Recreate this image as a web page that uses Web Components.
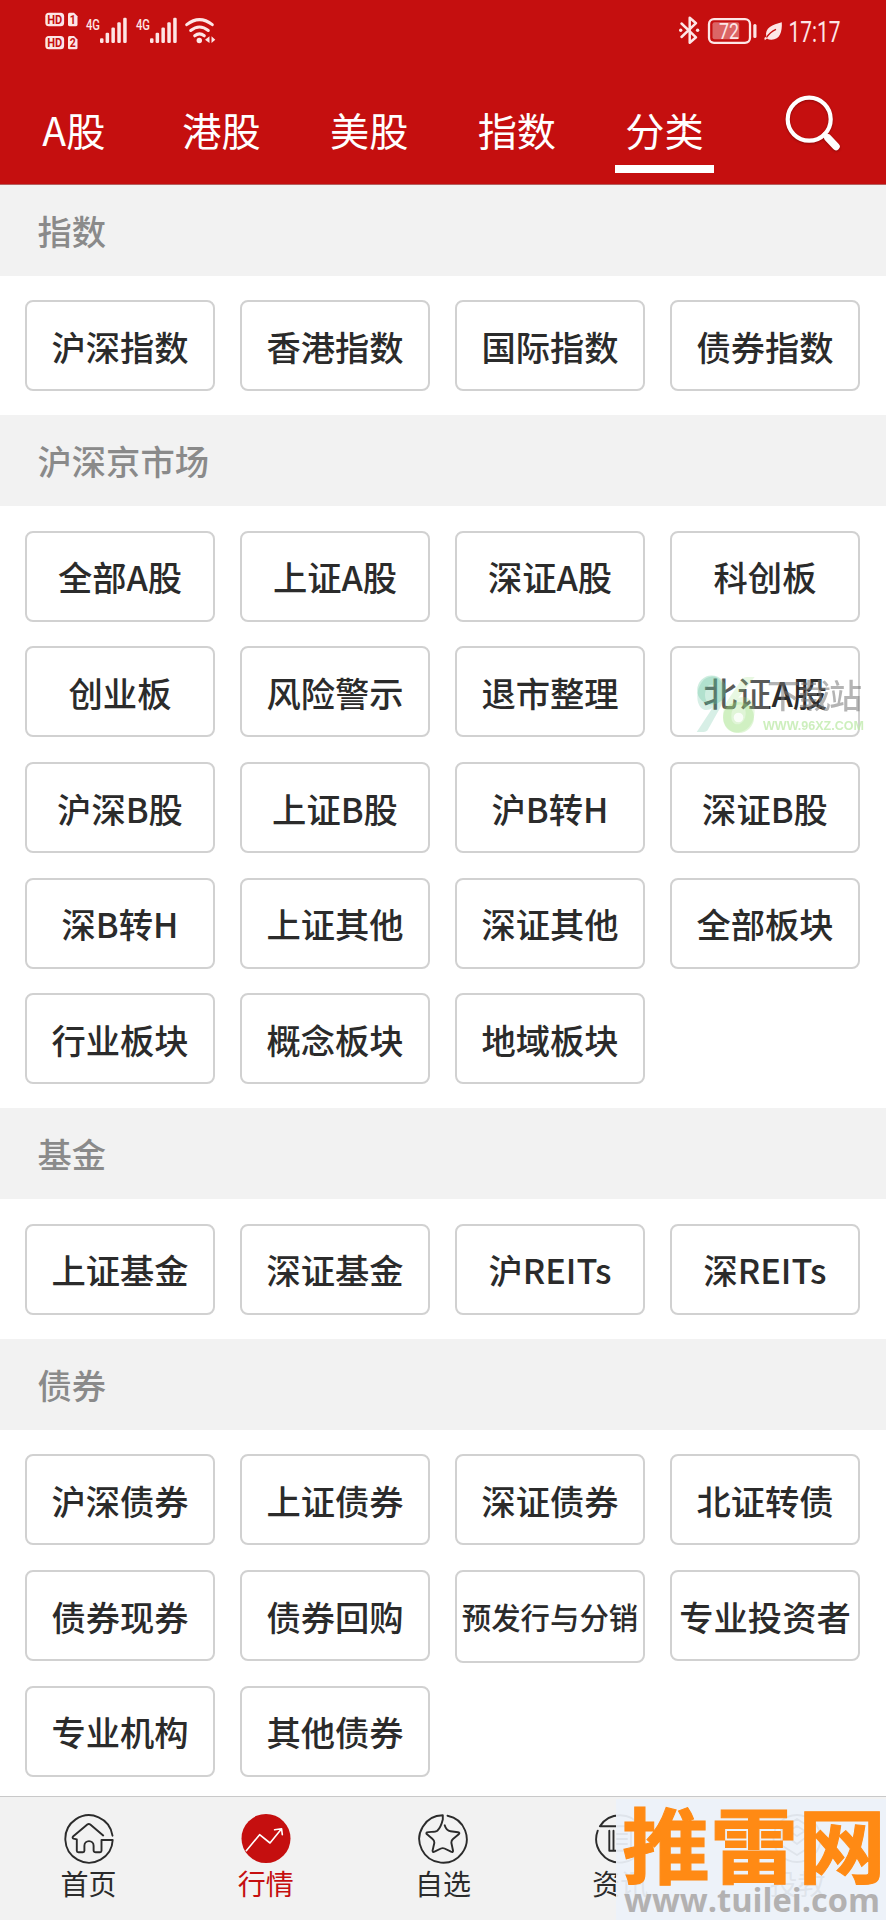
<!DOCTYPE html>
<html lang="zh-CN">
<head>
<meta charset="utf-8">
<title>行情 - 分类</title>
<style>
  * { box-sizing: border-box; }
  body {
    margin: 0;
    width: 886px;
    height: 1920px;
    overflow: hidden;
    background: #fff;
    color: #2b2b2b;
    font-family: "Noto Sans CJK SC", sans-serif;
  }
</style>
</head>
<body>
<market-app></market-app>

<script>
(() => {
  "use strict";

  const tabs = ["A股", "港股", "美股", "指数", "分类"];

  const sections = [
    { title: "指数", items: ["沪深指数", "香港指数", "国际指数", "债券指数"] },
    {
      title: "沪深京市场",
      items: [
        "全部A股", "上证A股", "深证A股", "科创板",
        "创业板", "风险警示", "退市整理", "北证A股",
        "沪深B股", "上证B股", "沪B转H", "深证B股",
        "深B转H", "上证其他", "深证其他", "全部板块",
        "行业板块", "概念板块", "地域板块",
      ],
    },
    { title: "基金", items: ["上证基金", "深证基金", "沪REITs", "深REITs"] },
    {
      title: "债券",
      items: [
        "沪深债券", "上证债券", "深证债券", "北证转债",
        "债券现券", "债券回购", "预发行与分销", "专业投资者",
        "专业机构", "其他债券",
      ],
    },
  ];

  const navItems = [
    {
      label: "首页",
      icon: `
        <path d="M48.500 21.700A23.700 23.700 0 1 0 48.700 26H37.500V36.800Q37.500 38.300 36 38.300H31.700Q29.800 38.300 29.600 36.500V31.700A4.600 4.600 0 0 0 20.400 31.700V36.800Q20.400 38.300 18.900 38.300H14.300Q12.800 38.300 12.800 36.800V25.400L9.500 24.600Q7.800 23.700 9.300 22.300L23.300 10.500Q24.800 9.300 26.300 10.500L39.200 21.400"/>`,
    },
    {
      label: "行情",
      active: true,
      icon: `
        <circle cx="25" cy="24.500" r="24.500" fill="currentColor" stroke="none"/>
        <path d="M5.300 36.700L18.600 20.700L29 29L40 15.500M33.600 15.800L40.600 14.800L41.300 20.700" stroke="#fff" stroke-width="1.600"/>`,
    },
    {
      label: "自选",
      icon: `
        <path d="M29.500 1.730A23.700 23.700 0 1 1 24.800 1.300V5.500Q22.800 13.500 19.300 16.800C17 18.500 12 17.400 9 18.300Q7.700 19 9 20.300L14.600 25Q16.500 26.500 16.300 29L14.600 36.500Q14.400 38.600 16.500 37.700L23 34.500Q24.700 33.700 26.500 34.500L33 37.700Q35.300 38.600 35 36.500L33.400 29Q33.200 26.500 35 25L40.700 20.300Q42.300 18.800 40 18.300L32.500 17.300C29.500 17 27.500 14 26.700 11.300"/>`,
    },
    {
      label: "资讯",
      icon: `
        <path d="M2.730 16.700A23.700 23.700 0 1 0 4.900 12.300H37M14.300 16.700V36.700H36V16.700M18.500 16.700V36.700M22 20H32M22 25H32M22 30H32"/>`,
    },
    {
      label: "投教",
      icon: `
        <circle cx="25" cy="24.500" r="23.500"/>
        <path d="M25 5L41 15V31L25 41L9 31V15ZM14 22L25 30L37 21M25 12L33 17L25 22L17 17Z"/>`,
    },
  ];

  class StatusBar extends HTMLElement {
    connectedCallback() {
      if (this.shadowRoot) return;
      const badge = (n, y) => `
        <rect x="45.300" y="${y}" width="18.800" height="13.400" rx="3.500"/>
        <path d="M69.500 ${y}H74L77.500 ${y + 3.5}V${y + 12}Q77.500 ${y + 13.4} 76 ${y + 13.4}H69.500Q68 ${y + 13.4} 68 ${y + 12}V${y + 1.5}Q68 ${y} 69.500 ${y}Z"/>
        <text class="cut" x="47.300" y="${y + 10.8}" font-size="12" textLength="15" lengthAdjust="spacingAndGlyphs">HD</text>
        <text class="cut" x="69.800" y="${y + 10.8}" font-size="12" textLength="6" lengthAdjust="spacingAndGlyphs">${n}</text>`;
      const signal = (x) => `
        <text x="${x}" y="29.500" font-size="15" font-weight="500" textLength="14" lengthAdjust="spacingAndGlyphs">4G</text>
        <rect x="${x + 14}" y="38.300" width="3.500" height="4.700" rx="1.200"/>
        <rect x="${x + 19.6}" y="32.800" width="3.500" height="10.200" rx="1.200"/>
        <rect x="${x + 25.4}" y="27.500" width="3.500" height="15.500" rx="1.200"/>
        <rect x="${x + 31.3}" y="22.300" width="3.500" height="20.700" rx="1.200"/>
        <rect x="${x + 37.2}" y="17.800" width="3.500" height="25.200" rx="1.200"/>`;

      this.attachShadow({ mode: "open" }).innerHTML = `
        <style>
          :host {
            display: flex;
            justify-content: space-between;
            box-sizing: border-box;
            height: 72px;
            padding: 10px 40px 0;
            color: #fde6e6;
          }
          svg { display: block; overflow: visible; fill: currentColor; font-family: Roboto, sans-serif; }
          .cut { fill: #c50f0f; font-weight: 700; }
          .line { fill: none; stroke: currentColor; stroke-linecap: round; }
        </style>
        <svg width="180" height="42" viewBox="40 10 180 42">
          ${badge(1, 12.8)}
          ${badge(2, 35.9)}
          ${signal(86)}
          ${signal(136)}
          <g class="line" stroke-width="3">
            <path d="M186.700 24.700Q199.500 14.500 212.300 24.700"/>
            <path d="M190.700 30.500Q199.500 23.500 208.300 30.500"/>
            <path d="M194.700 35.800Q199.500 32 204.300 35.800"/>
          </g>
          <circle cx="199.300" cy="40.500" r="2.700"/>
          <path d="M209.500 36.300V43L205 39.700ZM211.500 36.300V43L215.300 39.700Z"/>
        </svg>
        <svg width="170" height="42" viewBox="676 10 170 42">
          <g class="line" stroke-width="2.500" stroke-linejoin="round">
            <path d="M681.500 23.500L696 37.300L689.700 42.800V17.700L696 23.200L681.500 37"/>
          </g>
          <circle cx="680.700" cy="30.300" r="1.700"/>
          <circle cx="697.600" cy="30.300" r="1.700"/>
          <rect class="line" x="709" y="19.200" width="41" height="23.600" rx="5" stroke-width="2.300"/>
          <rect x="712.500" y="22.300" width="26.700" height="17" rx="2" opacity=".4"/>
          <rect x="753.300" y="24" width="3.200" height="14" rx="1.500"/>
          <text x="719" y="38.600" font-size="22" textLength="20" lengthAdjust="spacingAndGlyphs">72</text>
          <path d="M781.800 22.300C782.300 32 780 39.700 771.500 39.700Q768.500 39.700 767 38.500L764.800 40.200L764.300 38L766.300 36.500C764.500 28 772.500 24.500 781.800 22.300Z"/>
          <path d="M766.500 37.500Q770 32 776 29.300" fill="none" stroke="#c50f0f" stroke-width="1.300"/>
          <text x="788.500" y="42" font-size="29" textLength="52" lengthAdjust="spacingAndGlyphs">17:17</text>
        </svg>`;
    }
  }

  class MarketTabs extends HTMLElement {
    connectedCallback() {
      if (this.shadowRoot) return;
      const active = this.getAttribute("active");
      this.attachShadow({ mode: "open" }).innerHTML = `
        <style>
          * { box-sizing: border-box; }
          :host {
            display: grid;
            grid-template-columns: repeat(6, 1fr);
            height: 111.700px;
            color: #fff;
            font-size: 39.200px;
          }
          a {
            display: flex;
            flex-direction: column;
            align-items: center;
            justify-content: space-between;
            height: 101px;
            padding-top: 28px;
            line-height: 58px;
          }
          a.active::after {
            content: "";
            width: 99px;
            height: 8px;
            background: #fff;
          }
          svg { display: block; margin: 19px 0 0 43px; filter: drop-shadow(0 1px 1px rgba(80,0,0,.45)); }
        </style>
        ${tabs.map((t) => `<a class="${t === active ? "active" : ""}">${t}</a>`).join("")}
        <svg width="62" height="62" viewBox="0 0 62 62" fill="none" stroke="#fff" stroke-linecap="round">
          <circle cx="28.200" cy="28.200" r="21.500" stroke-width="4.200"/>
          <path d="M43.500 43.700L46 46.300" stroke-width="5"/>
          <path d="M47 47L55 55.500" stroke-width="7.500"/>
        </svg>`;
    }
  }

  class MarketChip extends HTMLElement {
    connectedCallback() {
      if (this.shadowRoot) return;
      this.attachShadow({ mode: "open" }).innerHTML = `
        <style>
          :host {
            display: flex;
            align-items: center;
            justify-content: center;
            height: 91px;
            border: 2px solid #d1d1d1;
            border-radius: 8px;
            box-sizing: border-box;
            font-size: 34.300px;
            font-weight: 500;
            line-height: 50px;
            white-space: nowrap;
          }
          :host([small]) { height: 92.500px; font-size: 29.400px; }
        </style>
        <span><slot></slot></span>`;
    }
  }

  class MarketSection extends HTMLElement {
    connectedCallback() {
      if (this.shadowRoot) return;
      this.attachShadow({ mode: "open" }).innerHTML = `
        <style>
          * { box-sizing: border-box; }
          :host { display: block; }
          h2 {
            margin: 0;
            height: 91px;
            padding-left: 37.500px;
            background: #f2f2f2;
            color: #8a8a8a;
            font-size: 34.300px;
            font-weight: 500;
            line-height: 91px;
          }
          .grid {
            display: grid;
            grid-template-columns: repeat(4, 190px);
            grid-auto-rows: 91px;
            gap: 24.600px 25px;
            padding: 24.600px 0 24px 25px;
          }
        </style>
        <h2>${this.getAttribute("heading")}</h2>
        <div class="grid"><slot></slot></div>`;
    }
  }

  class BottomNav extends HTMLElement {
    connectedCallback() {
      if (this.shadowRoot) return;
      this.attachShadow({ mode: "open" }).innerHTML = `
        <style>
          :host {
            display: grid;
            grid-template-columns: repeat(5, 1fr);
            height: 124px;
            box-sizing: border-box;
            padding-top: 16.500px;
            border-top: 1px solid #c9c9c9;
            background: #f2f2f2;
            font-size: 28px;
          }
          a { display: flex; flex-direction: column; align-items: center; line-height: 39px; }
          a.active { color: #c50f0f; }
          svg { display: block; fill: none; stroke: currentColor; stroke-width: 1.900; stroke-linecap: round; stroke-linejoin: round; }
        </style>
        ${navItems.map((n) => `
          <a class="${n.active ? "active" : ""}">
            <svg width="50" height="50" viewBox="0 0 50 50">${n.icon}</svg>
            <span>${n.label}</span>
          </a>`).join("")}`;
    }
  }

  // semi-transparent site marks lying over the page
  class SiteMark extends HTMLElement {
    connectedCallback() {
      if (this.shadowRoot) return;
      const marks = {
        station: `
          <svg width="176" height="66" viewBox="694 672 176 66">
            <rect x="697" y="675" width="72" height="58" fill="#fff" opacity=".22"/>
            <g opacity=".3">
              <circle cx="711.700" cy="690" r="14.500" fill="#5fc49a"/>
              <circle cx="738.500" cy="717.500" r="15.500" fill="#9be07d"/>
            </g>
            <circle cx="738.500" cy="717.500" r="4.800" fill="#fff" opacity=".8"/>
            <g font-family="Lato, sans-serif" font-weight="900" font-style="italic" font-size="76">
              <text x="693" y="732" fill="#4fb890" opacity=".22" textLength="33" lengthAdjust="spacingAndGlyphs">9</text>
              <text x="720" y="732" fill="#9be07d" opacity=".22" textLength="35" lengthAdjust="spacingAndGlyphs">6</text>
            </g>
            <text x="767" y="708" fill="#777" opacity=".55" font-size="33" font-weight="500" textLength="95">下载站</text>
            <text x="763" y="730" fill="#bdeaa8" opacity=".75" font-family="Liberation Sans, sans-serif" font-weight="700" font-size="12.500" textLength="101" lengthAdjust="spacingAndGlyphs">WWW.96XZ.COM</text>
          </svg>`,
        tuilei: `
          <svg width="270" height="121" viewBox="616 1799 270 121">
            <rect x="616" y="1799" width="270" height="121" fill="#edf2fa" opacity=".93"/>
            <text x="622" y="1876.500" fill="#ff8a14" stroke="#ff8a14" stroke-width="1" font-size="82" font-weight="700" textLength="264" lengthAdjust="spacingAndGlyphs">推雷网</text>
            <text x="624" y="1911.500" fill="#b3b1b1" font-family="Open Sans, sans-serif" font-size="33" font-weight="700" textLength="256" lengthAdjust="spacingAndGlyphs">www.tuilei.com</text>
          </svg>`,
      };
      this.attachShadow({ mode: "open" }).innerHTML = `
        <style>
          :host { display: block; position: absolute; pointer-events: none; }
          :host([kind="station"]) { left: 694px; top: 672px; }
          :host([kind="tuilei"]) { left: 616px; top: 1799px; }
          svg { display: block; overflow: visible; }
        </style>
        ${marks[this.getAttribute("kind")]}`;
    }
  }

  class MarketApp extends HTMLElement {
    connectedCallback() {
      if (this.shadowRoot) return;
      const chip = (t) => `<market-chip ${t.length > 5 && !/[A-Z]/.test(t) ? "small" : ""}>${t}</market-chip>`;
      this.attachShadow({ mode: "open" }).innerHTML = `
        <style>
          :host { display: flex; flex-direction: column; position: relative; height: 1920px; overflow: hidden; }
          header { background: #c50f0f; border-bottom: 1px solid #b56060; }
          main { flex: 1; min-height: 0; overflow: hidden; }
        </style>
        <header>
          <status-bar></status-bar>
          <market-tabs active="分类"></market-tabs>
        </header>
        <main>
          ${sections.map((s) => `
            <market-section heading="${s.title}">${s.items.map(chip).join("")}</market-section>`).join("")}
        </main>
        <bottom-nav></bottom-nav>
        <site-mark kind="station"></site-mark>
        <site-mark kind="tuilei"></site-mark>`;
    }
  }

  customElements.define("status-bar", StatusBar);
  customElements.define("market-tabs", MarketTabs);
  customElements.define("market-chip", MarketChip);
  customElements.define("market-section", MarketSection);
  customElements.define("bottom-nav", BottomNav);
  customElements.define("site-mark", SiteMark);
  customElements.define("market-app", MarketApp);
})();
</script>
</body>
</html>
